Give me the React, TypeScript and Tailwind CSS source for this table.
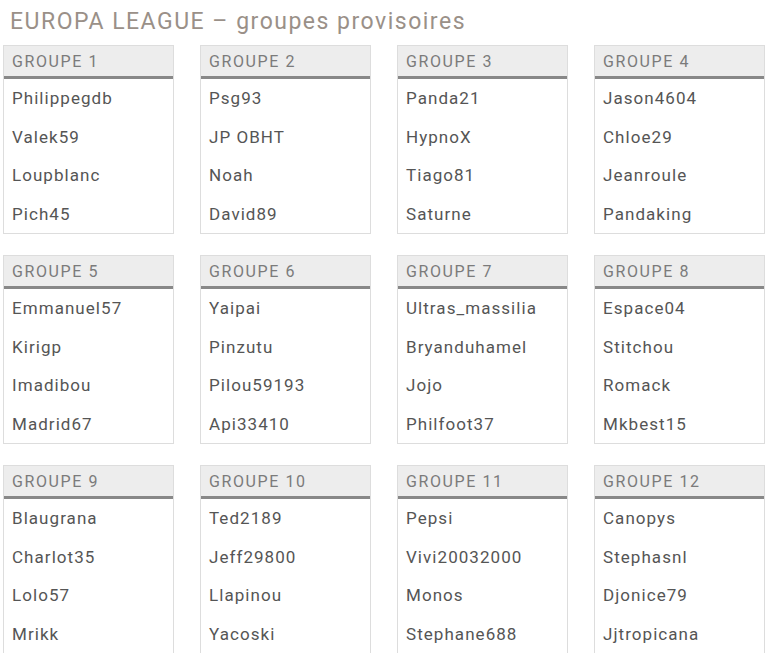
import React from "react";

const groups: string[][] = [
  ["Philippegdb", "Valek59", "Loupblanc", "Pich45"],
  ["Psg93", "JP OBHT", "Noah", "David89"],
  ["Panda21", "HypnoX", "Tiago81", "Saturne"],
  ["Jason4604", "Chloe29", "Jeanroule", "Pandaking"],
  ["Emmanuel57", "Kirigp", "Imadibou", "Madrid67"],
  ["Yaipai", "Pinzutu", "Pilou59193", "Api33410"],
  ["Ultras_massilia", "Bryanduhamel", "Jojo", "Philfoot37"],
  ["Espace04", "Stitchou", "Romack", "Mkbest15"],
  ["Blaugrana", "Charlot35", "Lolo57", "Mrikk"],
  ["Ted2189", "Jeff29800", "Llapinou", "Yacoski"],
  ["Pepsi", "Vivi20032000", "Monos", "Stephane688"],
  ["Canopys", "Stephasnl", "Djonice79", "Jjtropicana"],
];

export default function App() {
  return (
    <div
      className="w-[765px] h-[653px] overflow-hidden bg-white"
      style={{ fontFamily: "Roboto, 'Liberation Sans', sans-serif" }}
    >
      <h1 className="pl-[10px] pt-[7px] text-[23px] leading-[30px] tracking-[1.5px] text-[#9a9088] font-normal whitespace-nowrap">
        EUROPA LEAGUE – groupes provisoires
      </h1>
      <div className="mt-[8px] pl-[3px] grid grid-cols-[171px_171px_171px_171px] gap-x-[26px] gap-y-[21px]">
        {groups.map((names, i) => (
          <div key={i} className="border border-[#dddddd] bg-white">
            <div className="h-[33px] bg-[#ededed] border-b-[3px] border-[#888888] pl-[8px] text-[16px] leading-[31px] tracking-[1.6px] text-[#7b7b7b] whitespace-nowrap">
              GROUPE {i + 1}
            </div>
            <div>
              {names.map((n) => (
                <div
                  key={n}
                  className="pl-[8px] h-[38.5px] leading-[38.5px] text-[17px] tracking-[1.05px] text-[#555555] whitespace-nowrap"
                >
                  {n}
                </div>
              ))}
            </div>
          </div>
        ))}
      </div>
    </div>
  );
}
